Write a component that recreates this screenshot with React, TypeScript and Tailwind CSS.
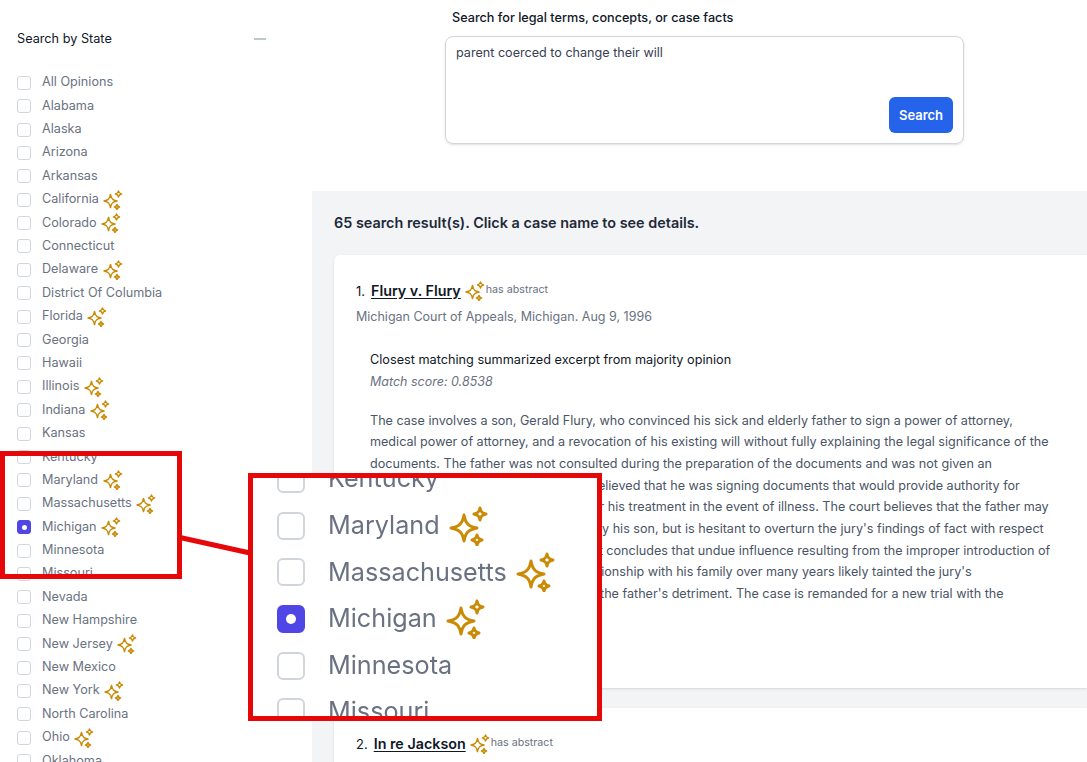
import clsx from "clsx";

type State = { name: string; star?: boolean; checked?: boolean };

const states: State[] = [
  { name: "All Opinions" },
  { name: "Alabama" },
  { name: "Alaska" },
  { name: "Arizona" },
  { name: "Arkansas" },
  { name: "California", star: true },
  { name: "Colorado", star: true },
  { name: "Connecticut" },
  { name: "Delaware", star: true },
  { name: "District Of Columbia" },
  { name: "Florida", star: true },
  { name: "Georgia" },
  { name: "Hawaii" },
  { name: "Illinois", star: true },
  { name: "Indiana", star: true },
  { name: "Kansas" },
  { name: "Kentucky" },
  { name: "Maryland", star: true },
  { name: "Massachusetts", star: true },
  { name: "Michigan", star: true, checked: true },
  { name: "Minnesota" },
  { name: "Missouri" },
  { name: "Nevada" },
  { name: "New Hampshire" },
  { name: "New Jersey", star: true },
  { name: "New Mexico" },
  { name: "New York", star: true },
  { name: "North Carolina" },
  { name: "Ohio", star: true },
  { name: "Oklahoma" },
];

const zoomed = states.slice(16, 22);

function Sparkles({ className }: { className?: string }) {
  return (
    <svg viewBox="0 0 20 20" fill="none" stroke="#ca8a04" strokeWidth="1.5" strokeLinejoin="round" className={clsx("shrink-0", className)}>
      <path d="M7.5 4.5C8.2 8.6 9.6 10.2 14 11C9.6 11.8 8.2 13.4 7.5 17.5C6.8 13.4 5.4 11.8 1 11C5.4 10.2 6.8 8.6 7.5 4.5Z" />
      <path d="M15.5 1C15.8 2.8 16.4 3.5 18.5 4C16.4 4.5 15.8 5.2 15.5 7C15.2 5.2 14.6 4.5 12.5 4C14.6 3.5 15.2 2.8 15.5 1Z" />
      <path d="M14 14.5C14.3 16 14.8 16.6 16.5 17C14.8 17.4 14.3 18 14 19.5C13.7 18 13.2 17.4 11.5 17C13.2 16.6 13.7 16 14 14.5Z" />
    </svg>
  );
}

function StateRow({ state }: { state: State }) {
  return (
    <li className="flex h-[23.4px] items-center">
      <span
        className={clsx(
          "flex h-[14px] w-[14px] shrink-0 items-center justify-center rounded-[3px] border",
          state.checked ? "border-[#4f46e5] bg-[#4f46e5]" : "border-gray-300 bg-white"
        )}
      >
        {state.checked && <span className="h-[5px] w-[5px] rounded-full bg-white" />}
      </span>
      <span className="ml-[11px] text-[12.65px] text-gray-500">{state.name}</span>
      {state.star && <Sparkles className="ml-[4.5px] h-[20px] w-[20px]" />}
    </li>
  );
}

function ZoomRow({ state }: { state: State }) {
  return (
    <li className="flex h-[46.6px] shrink-0 items-center">
      <span
        className={clsx(
          "flex h-[28px] w-[28px] shrink-0 items-center justify-center rounded-[6px] border-2",
          state.checked ? "border-[#4f46e5] bg-[#4f46e5]" : "border-gray-300 bg-white"
        )}
      >
        {state.checked && <span className="h-[10px] w-[10px] rounded-full bg-white" />}
      </span>
      <span className="ml-[23px] text-[25.2px] text-gray-500">{state.name}</span>
      {state.star && <Sparkles className="ml-[9px] h-[40px] w-[40px]" />}
    </li>
  );
}

function CaseHeading({ index, title }: { index: number; title: string }) {
  return (
    <div className="flex items-center text-[14.3px] leading-5 text-gray-900">
      <span className="mr-[6px] text-[13px]">{index}.</span>
      <a className="pb-[1px] font-semibold underline underline-offset-2">{title}</a>
      <Sparkles className="ml-[4px] h-[20px] w-[20px]" />
      <span className="mb-[2px] ml-[1px] text-[10.7px] text-gray-500">has abstract</span>
    </div>
  );
}

export default function App() {
  return (
    <div className="relative flex h-screen overflow-hidden bg-white font-['Inter',sans-serif]">
      <aside className="w-[312px] shrink-0 pl-[17px]">
        <div className="mt-[29px] flex w-[249px] items-center justify-between">
          <h2 className="text-[12.7px] font-normal text-gray-900">Search by State</h2>
          <svg viewBox="0 0 12 2" className="h-[2px] w-[12px]">
            <path d="M0 1H12" stroke="#a3b1b8" strokeWidth="1.4" />
          </svg>
        </div>
        <ul className="mt-[23px]">
          {states.map((s) => (
            <StateRow key={s.name} state={s} />
          ))}
        </ul>
      </aside>

      <main className="flex min-w-0 flex-1 flex-col">
        <section className="h-[191px] shrink-0 pl-[133px] pt-[9px]">
          <label className="ml-[7px] block text-[12.65px] font-medium text-gray-900">
            Search for legal terms, concepts, or case facts
          </label>
          <div className="mt-[8px] flex h-[108px] w-[519px] flex-col justify-between rounded-lg border border-gray-300 pb-[10px] pl-[10px] pr-[10px] pt-[7px] shadow-sm">
            <p className="text-[12.6px] text-gray-700">parent coerced to change their will</p>
            <button className="self-end h-[36px] w-[64px] rounded-md bg-[#2563eb] pt-[1px] text-[13px] font-semibold text-white">
              Search
            </button>
          </div>
        </section>

        <section className="min-h-0 flex-1 bg-[#f3f4f6] pl-[22px]">
          <h1 className="mt-[22px] text-[14.4px] font-semibold leading-5 text-gray-800">
            65 search result(s). Click a case name to see details.
          </h1>

          <article className="mt-[22px] h-[433px] rounded-l-md bg-white pl-[22px] pt-[25px] shadow-sm">
            <CaseHeading index={1} title="Flury v. Flury" />
            <p className="mt-[6px] text-[12.5px] text-gray-500">Michigan Court of Appeals, Michigan. Aug 9, 1996</p>
            <div className="ml-[14px] mt-[23px] w-[682px]">
              <p className="text-[12.7px] text-gray-900">Closest matching summarized excerpt from majority opinion</p>
              <p className="mt-[4px] text-[12.5px] italic text-gray-500">Match score: 0.8538</p>
              <p className="mt-[18px] text-[12.6px] leading-[21.7px] text-gray-600">
                The case involves a son, Gerald Flury, who convinced his sick and elderly father to sign a power of
                attorney, medical power of attorney, and a revocation of his existing will without fully explaining the
                legal significance of the documents. The father was not consulted during the preparation of the documents
                and was not given an opportunity to read them. The father believed that he was signing documents that
                would provide authority for managing his finances and property for his treatment in the event of illness.
                The court believes that the father may have been inappropriately influenced by his son, but is hesitant to
                overturn the jury's findings of fact with respect to the will's validity. However, the court concludes that
                undue influence resulting from the improper introduction of evidence regarding the son's own relationship
                with his family over many years likely tainted the jury's deliberations and ultimately worked to the
                father's detriment. The case is remanded for a new trial with the improper evidence excluded.
              </p>
            </div>
          </article>

          <article className="mt-[20px] h-[200px] rounded-l-md bg-white pl-[22px] pt-[25px] shadow-sm">
            <CaseHeading index={2} title="In re Jackson" />
          </article>
        </section>
      </main>

      {/* callout over the page */}
      <div className="absolute left-0 top-[451px] h-[128px] w-[182px] border-[5px] border-[#e60808]" />
      <svg className="absolute left-[178px] top-[530px] h-[30px] w-[74px]" viewBox="0 0 74 30">
        <path d="M2 7.5L72 23" stroke="#e60808" strokeWidth="5" />
      </svg>
      <div className="absolute left-[248px] top-[473px] h-[248px] w-[354px] overflow-hidden border-[5px] border-[#e60808] bg-white">
        <ul className="-mt-[22px] flex flex-col pl-[24px] blur-[0.4px]">
          {zoomed.map((s) => (
            <ZoomRow key={s.name} state={s} />
          ))}
        </ul>
      </div>
    </div>
  );
}
